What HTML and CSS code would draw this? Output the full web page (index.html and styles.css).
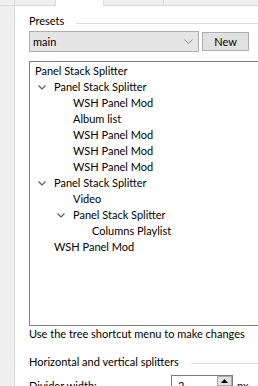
FILE: index.html
```html
<!DOCTYPE html>
<html lang="en">
  <head>
    <meta charset="UTF-8" />
    <title>Panel Stack Splitter - Layout</title>
    <link rel="stylesheet" href="styles.css">
  </head>
  <body>
    <div class="window">
      <div class="tabs">
        <div class="tab tab-main">Main</div>
        <div class="tab tab-layout selected">Layout</div>
        <div class="tab tab-status">Status bar</div>
        <div class="tab tab-notify">Notification area</div>
      </div>

      <div class="page">
        <!-- Presets -->
        <div class="group-head">
          <span class="group-title">Presets</span>
          <span class="group-line presets-line"></span>
        </div>
        <div class="preset-row">
          <div class="combo">
            <span>main</span>
            <svg class="combo-arrow" width="9" height="5" viewBox="0 0 9 5">
              <path d="M0.5 0.5 L4.5 4.5 L8.5 0.5" fill="none" stroke="#8a8a8a" stroke-width="1" />
            </svg>
          </div>
          <button class="btn" type="button">New</button>
        </div>

        <!-- Layout tree -->
        <div class="tree">
          <div class="row lv0">Panel Stack Splitter</div>
          <div class="row lv1"><span class="toggle"><svg width="8" height="5" viewBox="0 0 8 5"><path d="M0.5 0.5 L4 4 L7.5 0.5" fill="none" stroke="#5a5a5a" stroke-width="1.2" /></svg></span>Panel Stack Splitter</div>
          <div class="row lv2"><span class="toggle"></span>WSH Panel Mod</div>
          <div class="row lv2"><span class="toggle"></span>Album list</div>
          <div class="row lv2"><span class="toggle"></span>WSH Panel Mod</div>
          <div class="row lv2"><span class="toggle"></span>WSH Panel Mod</div>
          <div class="row lv2"><span class="toggle"></span>WSH Panel Mod</div>
          <div class="row lv1"><span class="toggle"><svg width="8" height="5" viewBox="0 0 8 5"><path d="M0.5 0.5 L4 4 L7.5 0.5" fill="none" stroke="#5a5a5a" stroke-width="1.2" /></svg></span>Panel Stack Splitter</div>
          <div class="row lv2"><span class="toggle"></span>Video</div>
          <div class="row lv2"><span class="toggle"><svg width="8" height="5" viewBox="0 0 8 5"><path d="M0.5 0.5 L4 4 L7.5 0.5" fill="none" stroke="#5a5a5a" stroke-width="1.2" /></svg></span>Panel Stack Splitter</div>
          <div class="row lv3"><span class="toggle"></span>Columns Playlist</div>
          <div class="row lv1"><span class="toggle"></span>WSH Panel Mod</div>
        </div>
        <p class="hint">Use the tree shortcut menu to make changes</p>

        <!-- Splitters -->
        <div class="group-head splitters-head">
          <span class="group-title">Horizontal and vertical splitters</span>
          <span class="group-line"></span>
        </div>
        <div class="field-row">
          <span class="field-label">Divider width:</span>
          <div class="spin">
            <span class="spin-value">2</span>
            <span class="spin-buttons">
              <span class="spin-up">
                <svg width="7" height="4" viewBox="0 0 7 4"><path d="M0 4 L3.5 0 L7 4 Z" fill="#000" /></svg>
              </span>
              <span class="spin-down"></span>
            </span>
          </div>
          <span class="unit">px</span>
        </div>
      </div>
    </div>
  </body>
</html>
```
FILE: styles.css
```css
body {
  margin: 0;
  background-color: #f0f0f0;
  font-family: Lato, "Liberation Sans", sans-serif;
  font-size: 11px;
  color: #000;
  overflow: hidden;
}

.window {
  width: 330px;
}

/* tab strip, mostly scrolled off the top */
.tabs {
  display: flex;
  height: 21px;
  margin-top: -15px;
  padding-left: 14px;
  border-bottom: 1px solid #d9d9d9;
  box-sizing: border-box;
}

.tab {
  height: 20px;
  line-height: 15px;
  text-align: center;
  background-color: #f0f0f0;
  border: 1px solid #d9d9d9;
  border-bottom: none;
  border-left: none;
  box-sizing: border-box;
}

.tab-main {
  width: 42px;
  border-left: 1px solid #d9d9d9;
}

.tab-layout {
  width: 48px;
}

.tab-status {
  width: 60px;
}

.tab-notify {
  width: 110px;
}

.tab.selected {
  background-color: #fff;
  height: 21px;
  margin-bottom: -1px;
}

.page {
  margin-left: 14px;
  border-left: 1px solid #d9d9d9;
  background-color: #fff;
  padding: 7px 0 30px 14px;
}

.group-head {
  display: flex;
  height: 16px;
  line-height: 16px;
}

.group-title {
  padding-right: 12px;
}

.group-line {
  flex: 1;
  height: 0;
  margin-top: 9px;
  border-top: 1px solid #dcdcdc;
}

.presets-line {
  margin-top: 10px;
}

.preset-row {
  display: flex;
  align-items: center;
  margin-top: 2px;
}

.combo {
  width: 170px;
  height: 21px;
  display: flex;
  align-items: center;
  justify-content: space-between;
  padding: 0 5px 0 3px;
  background-color: #e5e5e5;
  border: 1px solid #adadad;
  box-sizing: border-box;
}

.combo-arrow {
  margin-right: 0;
}

.btn {
  width: 47px;
  height: 19px;
  margin-left: 3px;
  padding: 0;
  font-family: inherit;
  font-size: 11px;
  color: #000;
  background-color: #e1e1e1;
  border: 1px solid #adadad;
}

.tree {
  width: 260px;
  height: 265px;
  margin-top: 9px;
  padding-top: 1px;
  border: 1px solid #828282;
  box-sizing: border-box;
}

.row {
  height: 16px;
  line-height: 16px;
  display: flex;
  align-items: center;
  white-space: nowrap;
}

.toggle {
  width: 19px;
  height: 16px;
  display: flex;
  align-items: center;
  padding-left: 3px;
  box-sizing: border-box;
}

.lv0 {
  padding-left: 5px;
}

.lv1 {
  padding-left: 5px;
}

.lv2 {
  padding-left: 24px;
}

.lv3 {
  padding-left: 43px;
}

.hint {
  margin: 0;
  height: 16px;
  line-height: 16px;
}

.splitters-head {
  margin-top: 12px;
}

.field-row {
  display: flex;
  align-items: center;
  margin-top: 5px;
}

.field-label {
  width: 142px;
}

.spin {
  width: 62px;
  height: 21px;
  display: flex;
  border: 1px solid #7a7a7a;
  box-sizing: border-box;
}

.spin-value {
  flex: 1;
  padding-left: 6px;
  line-height: 19px;
}

.spin-buttons {
  width: 15px;
  display: flex;
  flex-direction: column;
}

.spin-up,
.spin-down {
  height: 9px;
  display: flex;
  align-items: center;
  justify-content: center;
  background-color: #e1e1e1;
  border: 1px solid #adadad;
}

.unit {
  margin-left: 4px;
}
```
